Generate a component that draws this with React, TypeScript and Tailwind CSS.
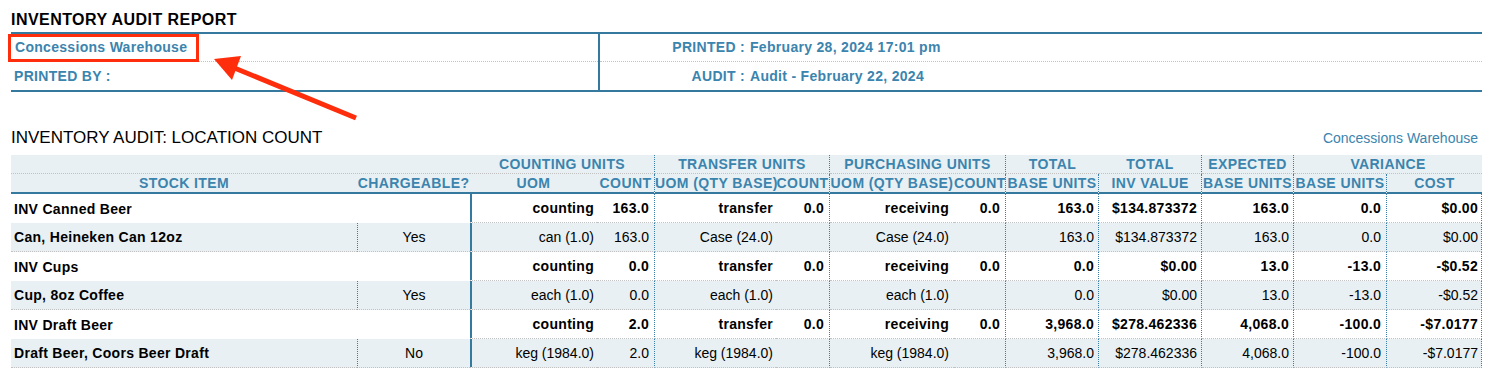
const blue = 'text-[#3b84ae]';

type Row = {
  group: boolean;
  name: string;
  charge?: string;
  cells: string[];
};

const rows: Row[] = [
  { group: true, name: 'INV Canned Beer', cells: ['counting', '163.0', 'transfer', '0.0', 'receiving', '0.0', '163.0', '$134.873372', '163.0', '0.0', '$0.00'] },
  { group: false, name: 'Can, Heineken Can 12oz', charge: 'Yes', cells: ['can (1.0)', '163.0', 'Case (24.0)', '', 'Case (24.0)', '', '163.0', '$134.873372', '163.0', '0.0', '$0.00'] },
  { group: true, name: 'INV Cups', cells: ['counting', '0.0', 'transfer', '0.0', 'receiving', '0.0', '0.0', '$0.00', '13.0', '-13.0', '-$0.52'] },
  { group: false, name: 'Cup, 8oz Coffee', charge: 'Yes', cells: ['each (1.0)', '0.0', 'each (1.0)', '', 'each (1.0)', '', '0.0', '$0.00', '13.0', '-13.0', '-$0.52'] },
  { group: true, name: 'INV Draft Beer', cells: ['counting', '2.0', 'transfer', '0.0', 'receiving', '0.0', '3,968.0', '$278.462336', '4,068.0', '-100.0', '-$7.0177'] },
  { group: false, name: 'Draft Beer, Coors Beer Draft', charge: 'No', cells: ['keg (1984.0)', '2.0', 'keg (1984.0)', '', 'keg (1984.0)', '', '3,968.0', '$278.462336', '4,068.0', '-100.0', '-$7.0177'] },
];

const widths = [346, 113, 127, 58, 121, 54, 124, 52, 93, 103, 92, 93, 95];

// data columns: index 0..10 → counting uom .. cost
const dataPad = ['pr-[3px]', 'pr-[5px]', 'pr-[3px]', 'pr-[5px]', 'pr-[5px]', 'pr-[5px]', 'pr-[4px]', 'pr-[4px]', 'pr-[4px]', 'pr-[5px]', 'pr-[3px]'];
const dataSep = [false, true, false, true, false, true, true, true, true, true, true];

function DataCells({ row }: { row: Row }) {
  return (
    <>
      {row.cells.map((c, i) => (
        <td
          key={i}
          className={`p-0 h-[29px] leading-[28px] text-right whitespace-nowrap border-b border-dotted border-b-[#c2c2c2] ${dataPad[i]} ${
            dataSep[i] ? 'border-r border-r-[#3a7fa8]' : ''
          } ${i === 0 ? 'shadow-[inset_2px_0_0_#36799f]' : ''}`}
        >
          {c}
        </td>
      ))}
    </>
  );
}

export default function App() {
  return (
    <div className="relative w-[1490px] h-[369px] overflow-hidden bg-white text-black font-['Liberation_Sans',Arial,sans-serif]">
      <div className="ml-[11px] w-[1471px]">
        {/* report title */}
        <h1 className="pt-[10px] mb-[2px] text-[16px] leading-[20px] font-bold tracking-[0.45px]">INVENTORY AUDIT REPORT</h1>

        {/* info block */}
        <div className={`flex border-y-2 border-[#36799f] text-[14px] font-bold tracking-[0.3px] ${blue}`}>
          <div className="w-[587px]">
            <div className="relative h-[28px] leading-[27px] pl-[4px] border-b border-dotted border-[#c2c2c2]">
              Concessions Warehouse
              <div className="absolute left-[-3px] top-0 w-[191px] h-[28px] border-[3px] border-[#fe2d0b]" />
            </div>
            <div className="h-[28px] leading-[28px] pl-[3px]">PRINTED BY :</div>
          </div>
          <div className="flex-1 border-l-2 border-[#36799f]">
            <div className="flex h-[28px] leading-[27px] border-b border-dotted border-[#c2c2c2]">
              <span className="w-[145px] text-right">PRINTED :</span>
              <span className="ml-[5px]">February 28, 2024 17:01 pm</span>
            </div>
            <div className="flex h-[28px] leading-[28px]">
              <span className="w-[145px] text-right">AUDIT :</span>
              <span className="ml-[5px]">Audit - February 22, 2024</span>
            </div>
          </div>
        </div>

        {/* section title */}
        <div className="flex items-baseline justify-between mt-[36px] mb-[7px] leading-[20px]">
          <h2 className="text-[17px]">INVENTORY AUDIT: LOCATION COUNT</h2>
          <span className={`text-[14px] pr-[4px] ${blue}`}>Concessions Warehouse</span>
        </div>

        {/* location count table */}
        <table className="table-fixed border-separate border-spacing-0 w-[1471px] text-[14px]">
          <colgroup>
            {widths.map((w, i) => (
              <col key={i} style={{ width: w }} />
            ))}
          </colgroup>
          <thead className={`bg-[#e8f0f4] font-bold tracking-[0.4px] ${blue}`}>
            <tr className="[&>th]:p-0 [&>th]:h-[19px] [&>th]:leading-[18px] [&>th]:whitespace-nowrap [&>th]:border-b [&>th]:border-dotted [&>th]:border-b-[#c2c2c2]">
              <th colSpan={2}></th>
              <th colSpan={2} className="border-r border-r-[#3a7fa8]">COUNTING UNITS</th>
              <th colSpan={2} className="border-r border-r-[#3a7fa8]">TRANSFER UNITS</th>
              <th colSpan={2} className="border-r border-r-[#3a7fa8]">PURCHASING UNITS</th>
              <th>TOTAL</th>
              <th className="border-r border-r-[#3a7fa8]">TOTAL</th>
              <th className="border-r border-r-[#3a7fa8]">EXPECTED</th>
              <th colSpan={2}>VARIANCE</th>
            </tr>
            <tr className="[&>th]:h-[20px] [&>th]:pt-[1px] [&>th]:pb-[2px] [&>th]:px-0 [&>th]:leading-[17px] [&>th]:whitespace-nowrap [&>th]:shadow-[inset_0_-2px_0_#36799f] [&>th]:border-dotted [&>th]:border-[#3a7fa8]">
              <th>STOCK ITEM</th>
              <th>CHARGEABLE?</th>
              <th>UOM</th>
              <th className="border-r">COUNT</th>
              <th>UOM (QTY BASE)</th>
              <th className="border-r">COUNT</th>
              <th>UOM (QTY BASE)</th>
              <th className="border-r">COUNT</th>
              <th className="border-r">BASE UNITS</th>
              <th className="border-r">INV VALUE</th>
              <th className="border-r">BASE UNITS</th>
              <th className="border-r">BASE UNITS</th>
              <th>COST</th>
            </tr>
          </thead>
          <tbody>
            {rows.map((r, i) =>
              r.group ? (
                <tr key={i} className="bg-white font-bold tracking-[0.3px]">
                  <td colSpan={2} className="p-0 pl-[3px] h-[29px] leading-[28px] whitespace-nowrap">
                    {r.name}
                  </td>
                  <DataCells row={r} />
                </tr>
              ) : (
                <tr key={i} className="bg-[#e8f0f4]">
                  <td className="p-0 pl-[3px] h-[29px] leading-[28px] whitespace-nowrap font-bold tracking-[0.3px] border-b border-dotted border-b-[#c2c2c2]">
                    {r.name}
                  </td>
                  <td className="p-0 h-[29px] leading-[28px] text-center border-b border-l border-dotted border-b-[#c2c2c2] border-l-[#3a7fa8]">
                    {r.charge}
                  </td>
                  <DataCells row={r} />
                </tr>
              )
            )}
          </tbody>
        </table>
      </div>

      {/* callout arrow */}
      <svg className="absolute left-0 top-0 pointer-events-none" width="400" height="130" viewBox="0 0 400 130">
        <line x1="356" y1="118" x2="232" y2="67" stroke="#fe2d0b" strokeWidth="5" />
        <polygon points="214,59 241,56 232,80" fill="#fe2d0b" />
      </svg>
    </div>
  );
}
